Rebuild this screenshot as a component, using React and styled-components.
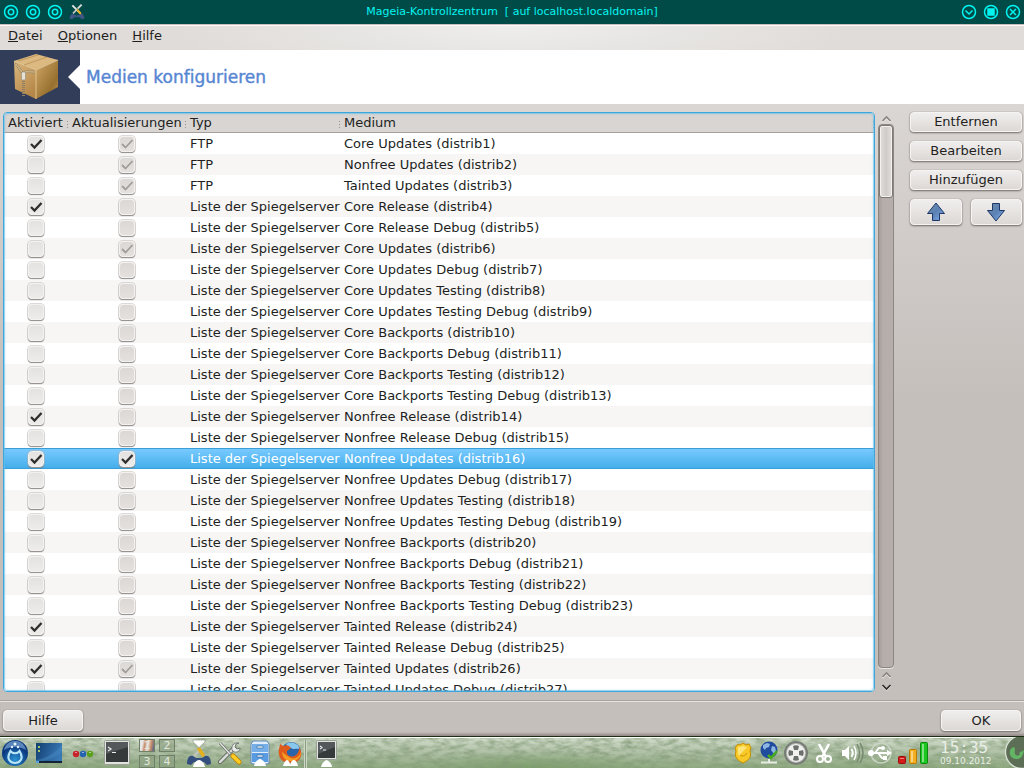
import React, { useState } from 'react';
import styled, { createGlobalStyle, css } from 'styled-components';

const GlobalStyle = createGlobalStyle`
  * {
    box-sizing: border-box;
  }

  body {
    margin: 0;
    font-family: "DejaVu Sans", Verdana, sans-serif;
    font-size: 13px;
    font-variant-ligatures: none;
    color: #221f1e;
  }

  button {
    margin: 0;
    padding: 0;
    border: 0;
    background: none;
    font: inherit;
    color: inherit;
  }
`;

const Desktop = styled.div`
  display: flex;
  flex-direction: column;
  height: 100vh;
  overflow: hidden;
`;

const TitleBar = styled.header`
  display: flex;
  align-items: center;
  justify-content: space-between;
  height: 24px;
  padding: 0 3px;
  background: #004a48;
  color: #00f4f0;
`;

const TitleButtons = styled.div`
  display: flex;
  flex: 1;
  gap: 6px;
  justify-content: ${p => (p.$end ? 'flex-end' : 'flex-start')};

  button, svg {
    display: block;
  }
`;

const WindowTitle = styled.h1`
  margin: 0;
  font-size: 11px;
  font-weight: normal;
  line-height: 22px;
  white-space: pre;
`;

const Menu = styled.nav`
  display: flex;
  gap: 15px;
  height: 26px;
  padding: 0 8px 3px;
  border-top: 1px solid #c9bebb;
  box-shadow: inset 0 1px #fbfafa;
  background: radial-gradient(ellipse 340px 60px at 50% 0, #eeeeed, #e0dcd9);
  line-height: 20px;
`;

const Banner = styled.div`
  display: flex;
  align-items: center;
  height: 54px;
  background: #fff;
`;

const BannerIcon = styled.div`
  width: 80px;
  height: 54px;
  background: #313d59;

  svg {
    display: block;
  }
`;

const BannerTitle = styled.h2`
  margin: 0 0 0 6px;
  font-size: 17px;
  font-weight: 500;
  line-height: 24px;
  color: #5786d2;
  -webkit-text-stroke: 0.4px #5786d2;
`;

const Body = styled.div`
  display: flex;
  flex: 1;
  flex-direction: column;
  min-height: 0;
  background: linear-gradient(#dad6d3, #c4bfbb 300px);
`;

const Main = styled.main`
  display: flex;
  flex: 1;
  min-height: 0;
  padding: 8px 2px 8px 3px;
`;

const Frame = styled.div`
  position: relative;
  flex: 1;
  overflow: hidden;
  border: 1px solid #3fa6dc;
  border-radius: 4px;
  background: #fff;

  &::after {
    content: '';
    position: absolute;
    inset: 0;
    border-radius: 3px;
    box-shadow: inset 0 0 0 1px #6cc5f090, inset 0 0 3px #3fa6dc90;
    pointer-events: none;
  }
`;

const Table = styled.table`
  width: 100%;
  table-layout: fixed;
  border-collapse: separate;
  border-spacing: 0;
`;

const Col = styled.col`
  width: ${p => (p.$w ? `${p.$w}px` : 'auto')};
`;

const Th = styled.th`
  height: 20px;
  padding: 1px 4px 0;
  border-bottom: 1px solid #a8a09c;
  background:
    repeating-linear-gradient(#99928e 0 1px, transparent 1px 3px) right 8px / 1px 7px no-repeat,
    #d9d5d2;
  font-weight: normal;
  line-height: 18px;
  text-align: left;
  vertical-align: bottom;
  white-space: nowrap;
`;

const Row = styled.tr`
  background: #fff;

  &:nth-child(even) {
    background: #f7f6f5;
  }

  ${p => p.$selected && css`
    &&:nth-child(n) {
      background: linear-gradient(#3a9fd8 0 1px, #78caff 1px, #45aeea 20px, #3a9fd8 20px);
      color: #fff;
    }
  `}
`;

const Td = styled.td`
  height: 21px;
  padding: ${p => (p.$center ? '0 1px 0 0' : '0 4px')};
  line-height: 21px;
  white-space: nowrap;
  text-align: ${p => (p.$center ? 'center' : 'left')};
`;

const Tick = styled.label`
  position: relative;
  display: inline-block;
  width: 18px;
  height: 18px;
  vertical-align: top;
  margin-top: 2px;

  input {
    display: block;
    width: 16px;
    height: 16px;
    margin: 1px;
    appearance: none;
    border: 1px solid #f4f2f1;
    border-radius: 4px;
    background: ${p => (p.$off ? 'linear-gradient(#dcd8d6, #e4e0de)' : 'linear-gradient(#e4e2e0, #eeecea)')};
    box-shadow: 0 0 0 1px #b9b4b180, 0 1px 1px #6b6561;
  }

  svg {
    position: absolute;
    inset: 0;
    pointer-events: none;
  }
`;

const ScrollBar = styled.div`
  display: flex;
  flex-direction: column;
  align-items: center;
  width: 16px;
  margin: 0 16px 0 3px;

  button, svg {
    display: block;
  }
`;

const Trough = styled.div`
  flex: 1;
  width: 16px;
  border: 1px solid #8d8682;
  border-radius: 4px;
  background: linear-gradient(90deg, #a59d9a, #b5aeaa 4px, #b5aeaa);
  box-shadow: 0 1px #e8e5e3;
`;

const Thumb = styled.div`
  height: 73px;
  border: 1px solid #7f7975;
  border-radius: 3px;
  background: linear-gradient(90deg, #e2dfdc, #cfcbc8 50%, #e2dfdc);
  box-shadow: inset 0 0 0 1px #f3f1f0;
`;

const Side = styled.aside`
  display: grid;
  grid-template-columns: 1fr 1fr;
  gap: 9px;
  align-content: start;
  width: 112px;
`;

const Button = styled.button`
  display: flex;
  align-items: center;
  justify-content: center;
  grid-column: ${p => (p.$half ? 'auto' : '1 / -1')};
  width: ${p => (p.$w ? `${p.$w}px` : 'auto')};
  height: ${p => p.$h || 20}px;
  border: 1px solid #f5f4f3;
  border-radius: 4px;
  background: linear-gradient(#f0eeed, #dcd8d5);
  box-shadow: 0 0 1px #8f8884, 0 1px 2px #6f6864;
  line-height: 18px;
`;

const Footer = styled.footer`
  display: flex;
  justify-content: space-between;
  height: 36px;
  padding: 9px 3px 0;
  border-top: 1px solid #aaa39f;
  box-shadow: inset 0 1px #e6e3e1, inset 0 -4px 3px -2px #8f8783;
`;

const GRASS = "url(\"data:image/svg+xml,%3Csvg xmlns='http://www.w3.org/2000/svg' width='512' height='32'%3E%3Cfilter id='g' x='0' y='0' width='100%25' height='100%25'%3E%3CfeTurbulence type='fractalNoise' baseFrequency='.09 .22' numOctaves='4' seed='7'/%3E%3CfeColorMatrix values='0 0 0 0 .22 0 0 0 0 .32 0 0 0 0 .18 1.6 0 0 0 -.55'/%3E%3C/filter%3E%3Crect width='512' height='32' filter='url(%23g)'/%3E%3C/svg%3E\")";

const Panel = styled.div`
  display: flex;
  justify-content: space-between;
  height: 32px;
  border-top: 1px solid #1d2f12;
  box-shadow: inset 0 1px #fff;
  background:
    ${GRASS},
    radial-gradient(ellipse 120px 18px at 52% 100%, #6f965c90, transparent),
    linear-gradient(#d2ddcc, #b4c4ab 45%, #8fa980);
`;

const PanelGroup = styled.div`
  display: flex;
  flex-shrink: 0;
`;

const Slot = styled.button`
  display: flex;
  align-items: center;
  justify-content: center;
  flex-shrink: 0;
  width: ${p => p.$w}px;
  height: 31px;

  svg {
    flex-shrink: 0;
  }
`;

const Pager = styled.div`
  display: grid;
  grid-template-columns: 16px 16px;
  grid-auto-rows: 13px;
  gap: 3px 4px;
  width: 42px;
  padding: 2px 3px 0;
`;

const PagerCell = styled.button`
  && {
    border: 1px solid #6f7f68;
    background: ${p => (p.$active
      ? 'linear-gradient(100deg, #e6e6e6 20%, #c98d68 35%, #e8e4e0 55%, #c98d68 75%, #4d6394)'
      : '#8fa384a0')};
    color: #e2e8de;
    font-size: 11px;
    line-height: 11px;
  }
`;

const Divider = styled.div`
  width: 3px;
  margin: 3px 5px 0 4px;
  border: solid #cdd8c7;
  border-width: 0 1px;
  background: #8b9c82;
`;

const Clock = styled.time`
  width: 66px;
  padding: 3px 0 0 6px;
  color: #e9eee6;
  font-size: 9px;
  line-height: 13px;
`;

const ClockTime = styled.span`
  display: block;
  font-family: "DejaVu Sans Mono", monospace;
  font-size: 16px;
  line-height: 15px;
`;

const MIRRORS = 'Liste der Spiegelserver';

// [enabled, updates, type, medium, updates column is editable]
const MEDIA = [
  [true, true, 'FTP', 'Core Updates (distrib1)'],
  [false, true, 'FTP', 'Nonfree Updates (distrib2)'],
  [false, true, 'FTP', 'Tainted Updates (distrib3)'],
  [true, false, MIRRORS, 'Core Release (distrib4)'],
  [false, false, MIRRORS, 'Core Release Debug (distrib5)'],
  [false, true, MIRRORS, 'Core Updates (distrib6)'],
  [false, false, MIRRORS, 'Core Updates Debug (distrib7)'],
  [false, false, MIRRORS, 'Core Updates Testing (distrib8)'],
  [false, false, MIRRORS, 'Core Updates Testing Debug (distrib9)'],
  [false, false, MIRRORS, 'Core Backports (distrib10)'],
  [false, false, MIRRORS, 'Core Backports Debug (distrib11)'],
  [false, false, MIRRORS, 'Core Backports Testing (distrib12)'],
  [false, false, MIRRORS, 'Core Backports Testing Debug (distrib13)'],
  [true, false, MIRRORS, 'Nonfree Release (distrib14)'],
  [false, false, MIRRORS, 'Nonfree Release Debug (distrib15)'],
  [true, true, MIRRORS, 'Nonfree Updates (distrib16)', true],
  [false, false, MIRRORS, 'Nonfree Updates Debug (distrib17)'],
  [false, false, MIRRORS, 'Nonfree Updates Testing (distrib18)'],
  [false, false, MIRRORS, 'Nonfree Updates Testing Debug (distrib19)'],
  [false, false, MIRRORS, 'Nonfree Backports (distrib20)'],
  [false, false, MIRRORS, 'Nonfree Backports Debug (distrib21)'],
  [false, false, MIRRORS, 'Nonfree Backports Testing (distrib22)'],
  [false, false, MIRRORS, 'Nonfree Backports Testing Debug (distrib23)'],
  [true, false, MIRRORS, 'Tainted Release (distrib24)'],
  [false, false, MIRRORS, 'Tainted Release Debug (distrib25)'],
  [true, true, MIRRORS, 'Tainted Updates (distrib26)'],
  [false, false, MIRRORS, 'Tainted Updates Debug (distrib27)'],
];

const Ring = ({ children }) => (
  <svg width="16" height="16" viewBox="0 0 16 16" fill="none" stroke="#00f4f0" strokeWidth="1.5">
    <circle cx="8" cy="8" r="6.5" />
    {children}
  </svg>
);

const Tools = ({ size }) => (
  <svg width={size} height={size} viewBox="0 0 24 24">
    <path d="M1 22c0-6 3-8 6-7l3 2h4l3-2c3-1 6 1 6 7l-4 1-3-3H8l-3 3z" fill="#3f5583" />
    <path d="M5 2l6 6 6 6" stroke="#e2e4e1" strokeWidth="3" fill="none" />
    <path d="M19 1l-6 6" stroke="#d5d8d5" strokeWidth="3" />
    <path d="M12 8l-6 6" stroke="#c9ccc8" strokeWidth="2.500" />
    <path d="M13 9l4 5" stroke="#e5ae1c" strokeWidth="3" strokeLinecap="round" />
  </svg>
);

const Package = () => (
  <svg width="80" height="54" viewBox="0 0 80 54">
    <defs>
      <linearGradient id="boxLeft" x2="0.6" y2="1">
        <stop stopColor="#dcb77e" />
        <stop offset="1" stopColor="#b58748" />
      </linearGradient>
      <linearGradient id="boxRight" y2="1">
        <stop stopColor="#d0a667" />
        <stop offset="0.7" stopColor="#97702f" />
        <stop offset="1" stopColor="#c09550" />
      </linearGradient>
    </defs>
    <path d="M36 4l22 6-22 10-22-9z" fill="#dcb980" />
    <path d="M14 11l22 9v29l-21-10z" fill="url(#boxLeft)" />
    <path d="M58 10v27L36 49V20z" fill="url(#boxRight)" />
    <path d="M14 11l22 9 22-10M36 20v29" stroke="#ecd0a0" strokeWidth="0.8" fill="none" />
    <path d="M24 15l23-8M18 11l20-6" stroke="#b98f50" strokeWidth="0.8" fill="none" />
    <path d="M15 14c4 2 5 7 8 9 2-2 7-1 12-1M23.500 25v21" stroke="#8f8064" strokeWidth="3" strokeDasharray="1 1" fill="none" />
    <path d="M15 14c4 2 5 7 8 9 2-2 7-1 12-1" stroke="#d8c8a5" strokeWidth="0.8" fill="none" />
    <rect x="21.500" y="22" width="4" height="8" rx="1" fill="#e5e1d5" stroke="#91897a" strokeWidth="0.600" />
    <path d="M80 15v24L68 27z" fill="#fff" />
  </svg>
);

const Arrow = ({ down }) => (
  <svg width="20" height="20" viewBox="0 0 20 20">
    <defs>
      <linearGradient id="arrowBlue" y2="1">
        <stop stopColor="#7390a8" />
        <stop offset="0.5" stopColor="#5a80b4" />
        <stop offset="1" stopColor="#85b2ee" />
      </linearGradient>
    </defs>
    <path
      d={down ? 'M6.500 1.500h7v7h5L10 19 1.500 8.500h5z' : 'M10 1l8.500 10.500h-5v7h-7v-7h-5z'}
      fill="url(#arrowBlue)"
      stroke="#1c3768"
      strokeWidth="1"
      strokeLinejoin="round"
    />
  </svg>
);

const Chevron = ({ down, color = '#8b8581' }) => (
  <svg width="16" height="12" viewBox="0 0 16 12" fill="none">
    <path d={down ? 'M4.500 6l4 4 4-4' : 'M4.500 10l4-4 4 4'} stroke="#f3f1f0" strokeWidth="1.500" />
    <path d={down ? 'M4.500 5l4 4 4-4' : 'M4.500 9l4-4 4 4'} stroke={color} strokeWidth="1.700" />
  </svg>
);

const StartIcon = () => (
  <svg width="28" height="28" viewBox="0 0 28 28">
    <defs>
      <radialGradient id="startBlue" cy="0.75">
        <stop stopColor="#2a93d4" />
        <stop offset="1" stopColor="#0c3a80" />
      </radialGradient>
    </defs>
    <circle cx="14" cy="14" r="13" fill="url(#startBlue)" />
    <path d="M3 11C5 4 9 2 14 2s9 2 11 9c-6-4-16-4-22 0z" fill="#7da5d2" opacity="0.7" />
    <path d="M9.500 12c-5 8 0 12 4.500 12s9.500-4 4.500-12c-2 3-7 3-9 0z" fill="none" stroke="#b8e5f8" strokeWidth="2.200" />
    <circle cx="11" cy="8" r="1.200" fill="#e2f3fc" />
    <circle cx="14" cy="5" r="1.500" fill="#e2f3fc" />
    <circle cx="17" cy="8" r="1.200" fill="#e2f3fc" />
  </svg>
);

const FolderViewIcon = () => (
  <svg width="26" height="20" viewBox="0 0 26 20">
    <defs>
      <linearGradient id="deskBlue" x2="1" y2="0.3">
        <stop stopColor="#123e70" />
        <stop offset="1" stopColor="#3878b5" />
      </linearGradient>
    </defs>
    <rect width="26" height="20" fill="url(#deskBlue)" />
    <path d="M0 17C10 16 20 9 26 2v7c-7 6-15 9-26 10z" fill="#4c8fc8" opacity="0.4" />
    <path d="M2 3h2v2H2zM2 7h2v2H2z" fill="#a5c86e" />
    <rect y="18" width="26" height="2" fill="#122334" />
    <rect y="18" width="3" height="2" fill="#5ba2e0" />
  </svg>
);

const DotsIcon = () => (
  <svg width="22" height="10" viewBox="0 0 22 10">
    <circle cx="4" cy="6" r="3.200" fill="#c8242c" />
    <circle cx="11" cy="6" r="3.200" fill="#2464b0" />
    <circle cx="18" cy="6" r="3.200" fill="#5da01e" />
    <path d="M3 4.500h2M10 4.500h2M17 4.500h2" stroke="#fff" strokeOpacity="0.5" />
  </svg>
);

const TerminalIcon = ({ width, open }) => (
  <svg width={width} height="28" viewBox={`0 0 ${width} 28`}>
    <rect x="0.500" y="1.500" width={width - 1} height={open ? 19 : 24} rx="1" fill="#e1e3df" stroke="#9ba097" />
    <rect x="2" y="3" width={width - 4} height={open ? 16 : 20} fill="#373a3b" />
    <path d={`M2 3h${width - 4}v5L2 15z`} fill="#54585a" />
    <path d={open ? 'M4 7l2 1.500-2 1.500M7 11h3' : 'M4 8l3 2-3 2M8 13.500h4'} stroke="#eee" strokeWidth="1.200" fill="none" />
    {open && <path d="M5 28c1-5 5-7 5.500-7s5 2 5.500 7z" fill="#fff" />}
  </svg>
);

const ControlCenterIcon = () => (
  <svg width="24" height="28" viewBox="0 0 24 28">
    <path d="M0 25c0-7 3-9 6-8l3 2h6l3-2c3-1 6 1 6 8l-4 1-3-3H7l-3 3z" fill="#344f7d" />
    <path d="M7 17l5-5" stroke="#bec3bb" strokeWidth="2.500" />
    <path d="M12 10l4 6" stroke="#e5ae1c" strokeWidth="3.500" strokeLinecap="round" />
    <path d="M6 1h12v2c-2 2-4 3-6 6-2-3-4-4-6-6z" fill="#fff" stroke="#818b7a" strokeWidth="0.600" />
    <path d="M6 28c1-5 4-7 6-7s5 2 6 7z" fill="#fff" />
  </svg>
);

const WrenchIcon = () => (
  <svg width="24" height="24" viewBox="0 0 24 24">
    <path d="M2 21L16 7" stroke="#5c625d" strokeWidth="4.500" strokeLinecap="round" />
    <path d="M2 21L16 7" stroke="#d7dad5" strokeWidth="2.500" strokeLinecap="round" />
    <path d="M21 2l-3 1-1 3 2 2 3-1c0 4-5 6-8 2-1-4 2-8 7-7z" fill="#e8eae7" stroke="#626963" strokeWidth="0.800" />
    <path d="M2 2l10 11" stroke="#69706a" strokeWidth="2.800" />
    <path d="M2 2l10 11" stroke="#e4e6e2" strokeWidth="1.400" />
    <path d="M15 15l6 6" stroke="#b58200" strokeWidth="5" strokeLinecap="round" />
    <path d="M15 15l6 6" stroke="#ffcb24" strokeWidth="3.500" strokeLinecap="round" />
  </svg>
);

const CabinetIcon = () => (
  <svg width="20" height="26" viewBox="0 0 20 26">
    <path d="M3 1h14l2 3v19l-2 1H3l-2-1V4z" fill="#e2eef9" stroke="#5e87b6" />
    <rect x="2" y="4" width="16" height="8" fill="#76afe8" />
    <rect x="2" y="13" width="16" height="9" fill="#589be0" />
    <path d="M7 6h6v2H7zM7 15h6v2H7z" fill="#fff" stroke="#376ba2" strokeWidth="0.700" />
    <path d="M4 26c1-5 5-7 6-7s5 2 6 7z" fill="#fff" />
  </svg>
);

const FirefoxIcon = () => (
  <svg width="24" height="26" viewBox="0 0 24 26">
    <circle cx="13" cy="12" r="10" fill="#2965a8" />
    <path d="M8 4c5-3 12-1 14 5-4-1-6 1-9-1-2 0-4-2-5-4z" fill="#88c8ee" />
    <path d="M3 3c0 2 1 3 3 3 3-2 6 0 7 2l-4 3c-1 6 7 7 10 3 2-2 2-5 2-7 6 9-1 17-9 16C1 23-2 13 3 3z" fill="#df5b1b" />
    <path d="M4 12c0 5 4 9 8 9 6 1 11-3 11-9-2 6-8 8-12 5-3-2-5-3-7-5z" fill="#f49d22" />
    <path d="M5 26c1-4 3-6 4-6s3 2 3 5c1-3 2-5 4-5s3 3 4 6z" fill="#fff" />
  </svg>
);

const ShieldIcon = () => (
  <svg width="18" height="22" viewBox="0 0 18 22">
    <path d="M4 2l2 1 3-2 3 2 3-1 2 4-1 3c2 6-1 9-7 12-6-3-9-6-7-12L1 6z" fill="#f8c928" stroke="#c48e00" />
    <path d="M4 5l5-1 4 1-8 9c-2-3-1-6-1-9z" fill="#fff19b" opacity="0.700" />
    <path d="M6 13c3 2 5 1 7-2" stroke="#ca9300" fill="none" />
  </svg>
);

const GlobeIcon = () => (
  <svg width="20" height="24" viewBox="0 0 20 24">
    <circle cx="10" cy="9" r="8.500" fill="#204c9e" />
    <path d="M4 4l4-2 3 1-1 3-3 1-1 2-2-2zM13 5l3 1 1 4-2 3-3-4z" fill="#8db7e2" />
    <path d="M9 14l3 3 6-7" stroke="#49ad1b" strokeWidth="2.500" fill="none" />
    <path d="M10 18v3M2 21.500h16" stroke="#e7ede4" strokeWidth="2" />
  </svg>
);

const WheelIcon = () => (
  <svg width="26" height="26" viewBox="0 0 26 26">
    <circle cx="13" cy="13" r="11" fill="#b9bbb8" stroke="#787d76" strokeWidth="2" />
    <circle cx="13" cy="13" r="9" fill="#f1f2f0" />
    <path d="M10 6q3-1.500 6 0l-1 4h-4zM10 20q3 1.500 6 0l-1-4h-4zM6 10q-1.500 3 0 6l4-1v-4zM20 10q1.500 3 0 6l-4-1v-4z" fill="#6c706c" />
  </svg>
);

const ScissorsIcon = () => (
  <svg width="18" height="22" viewBox="0 0 18 22" fill="none" stroke="#fff">
    <path d="M4 2l7 13M14 2L7 15" strokeWidth="2.500" />
    <circle cx="5" cy="17" r="3" strokeWidth="2" />
    <circle cx="13" cy="17" r="3" strokeWidth="2" />
  </svg>
);

const SpeakerIcon = () => (
  <svg width="24" height="24" viewBox="0 0 24 24" fill="none">
    <path d="M2 9h3l4-4v14l-4-4H2z" fill="#fff" />
    <path d="M11.500 8q2.500 4 0 8" stroke="#fff" strokeWidth="2" />
    <path d="M14 5q4 7 0 14" stroke="#fff" strokeWidth="1.500" />
    <path d="M17 3q5 9 0 18M20 2q6 10 0 20" stroke="#788a70" strokeWidth="1.500" />
  </svg>
);

const UsbIcon = () => (
  <svg width="26" height="24" viewBox="0 0 26 24" fill="none" stroke="#fff">
    <circle cx="14" cy="12" r="10" stroke="#cbd5c6" strokeWidth="1.500" />
    <path d="M3 12h18M8 12l4-5h4M11 12l4 5h3" strokeWidth="2" />
    <circle cx="4" cy="12" r="3" fill="#fff" stroke="none" />
    <path d="M20 9l5 3-5 3z" fill="#fff" stroke="none" />
    <circle cx="16" cy="7" r="2" fill="#fff" stroke="none" />
    <path d="M16 15h4v4h-4z" fill="#fff" stroke="none" />
  </svg>
);

const SignalIcon = () => (
  <svg width="32" height="24" viewBox="0 0 32 24">
    <rect x="0.500" y="15.500" width="7" height="7" rx="1" fill="#d51a1a" stroke="#9a0c0c" />
    <rect x="11.500" y="8.500" width="7" height="14" rx="1" fill="#f3ae22" stroke="#b87a00" />
    <rect x="22.500" y="1.500" width="7" height="21" rx="1" fill="#1cc620" stroke="#0b8a0e" />
    <path d="M24 3h2v18h-2zM13 10h2v11h-2zM2 17h4v1H2z" fill="#fff" opacity="0.450" />
  </svg>
);

const CashewIcon = () => (
  <svg width="24" height="31" viewBox="0 0 24 31">
    <circle cx="22" cy="15" r="16.500" fill="#5d6e56" stroke="#d9e1d5" strokeWidth="1.300" />
    <path d="M14 10c-6 1-6 11 2 12 4 0 6-2 7-5l1-4-5 3 1 1c-1 2-4 2-5 0-1-3 1-5-1-7z" fill="#62b564" />
  </svg>
);

const CheckBox = ({ label, checked, off, onChange }) => (
  <Tick $off={off}>
    <input type="checkbox" aria-label={label} checked={checked} disabled={off} onChange={onChange} />
    {checked && (
      <svg width="18" height="18" viewBox="0 0 18 18" fill="none">
        <path d="M4 9l3.500 3.500L14.500 5" stroke={off ? '#a19d9a' : '#302d2c'} strokeWidth={off ? 1.8 : 2.3} />
      </svg>
    )}
  </Tick>
);

const MediaList = () => {
  const [enabled, setEnabled] = useState(MEDIA.map(m => m[0]));
  const [updates, setUpdates] = useState(MEDIA.map(m => m[1]));
  const [selected, setSelected] = useState(15);
  const toggle = (set, i) => () => set(list => list.map((v, n) => (n === i ? !v : v)));

  return (
    <Frame>
      <Table>
        <colgroup>
          <Col $w={64} />
          <Col $w={118} />
          <Col $w={154} />
          <Col />
        </colgroup>
        <thead>
          <tr>
            <Th>Aktiviert</Th>
            <Th>Aktualisierungen</Th>
            <Th>Typ</Th>
            <Th>Medium</Th>
          </tr>
        </thead>
        <tbody>
          {MEDIA.map(([, , type, name, editable], i) => (
            <Row key={name} $selected={i === selected} onClick={() => setSelected(i)}>
              <Td $center>
                <CheckBox label={`Aktiviert ${name}`} checked={enabled[i]} onChange={toggle(setEnabled, i)} />
              </Td>
              <Td $center>
                <CheckBox
                  label={`Aktualisierungen ${name}`}
                  checked={updates[i]}
                  off={!editable}
                  onChange={toggle(setUpdates, i)}
                />
              </Td>
              <Td>{type}</Td>
              <Td>{name}</Td>
            </Row>
          ))}
        </tbody>
      </Table>
    </Frame>
  );
};

const App = () => (
  <Desktop>
    <GlobalStyle />
    <TitleBar>
      <TitleButtons>
        {[0, 1, 2].map(n => (
          <button key={n} type="button"><Ring><circle cx="8" cy="8" r="2.700" /></Ring></button>
        ))}
        <button type="button"><Tools size={16} /></button>
      </TitleButtons>
      <WindowTitle>{'Mageia-Kontrollzentrum  [ auf localhost.localdomain]'}</WindowTitle>
      <TitleButtons $end>
        <button type="button"><Ring><path d="M4.500 6.500L8 10l3.500-3.500" /></Ring></button>
        <button type="button"><Ring><rect x="5" y="5" width="6" height="6" fill="#00f4f0" /></Ring></button>
        <button type="button"><Ring><path d="M5 5l6 6M11 5l-6 6" /></Ring></button>
      </TitleButtons>
    </TitleBar>
    <Menu>
      <button type="button"><u>D</u>atei</button>
      <button type="button"><u>O</u>ptionen</button>
      <button type="button"><u>H</u>ilfe</button>
    </Menu>
    <Banner>
      <BannerIcon><Package /></BannerIcon>
      <BannerTitle>Medien konfigurieren</BannerTitle>
    </Banner>
    <Body>
      <Main>
        <MediaList />
        <ScrollBar>
          <button type="button"><Chevron /></button>
          <Trough><Thumb /></Trough>
          <button type="button"><Chevron /></button>
          <button type="button"><Chevron down color="#2f2b2a" /></button>
        </ScrollBar>
        <Side>
          <Button type="button">Entfernen</Button>
          <Button type="button">Bearbeiten</Button>
          <Button type="button">Hinzufügen</Button>
          <Button type="button" $half $h={26}><Arrow /></Button>
          <Button type="button" $half $h={26}><Arrow down /></Button>
        </Side>
      </Main>
      <Footer>
        <Button type="button" $w={80} $h={21}>Hilfe</Button>
        <Button type="button" $w={80} $h={21}>OK</Button>
      </Footer>
    </Body>
    <Panel>
      <PanelGroup>
        <Slot type="button" $w={30}><StartIcon /></Slot>
        <Slot type="button" $w={38}><FolderViewIcon /></Slot>
        <Slot type="button" $w={30}><DotsIcon /></Slot>
        <Slot type="button" $w={38}><TerminalIcon width={26} /></Slot>
        <Pager>
          <PagerCell type="button" $active>1</PagerCell>
          <PagerCell type="button">2</PagerCell>
          <PagerCell type="button">3</PagerCell>
          <PagerCell type="button">4</PagerCell>
        </Pager>
        <Slot type="button" $w={42}><ControlCenterIcon /></Slot>
        <Slot type="button" $w={20}><WrenchIcon /></Slot>
        <Slot type="button" $w={40}><CabinetIcon /></Slot>
        <Slot type="button" $w={20}><FirefoxIcon /></Slot>
        <Divider />
        <Slot type="button" $w={28}><TerminalIcon width={21} open /></Slot>
      </PanelGroup>
      <PanelGroup>
        <Slot type="button" $w={26}><ShieldIcon /></Slot>
        <Slot type="button" $w={26}><GlobeIcon /></Slot>
        <Slot type="button" $w={28}><WheelIcon /></Slot>
        <Slot type="button" $w={28}><ScissorsIcon /></Slot>
        <Slot type="button" $w={28}><SpeakerIcon /></Slot>
        <Slot type="button" $w={28}><UsbIcon /></Slot>
        <Slot type="button" $w={40}><SignalIcon /></Slot>
        <Clock>
          <ClockTime>15:35</ClockTime>
          09.10.2012
        </Clock>
        <Slot type="button" $w={24}><CashewIcon /></Slot>
      </PanelGroup>
    </Panel>
  </Desktop>
);

export default App;
